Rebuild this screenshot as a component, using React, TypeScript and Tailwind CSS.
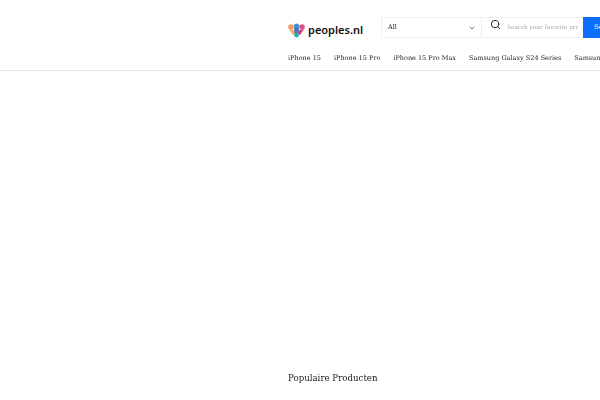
import { ChevronDown, Search } from "lucide-react";

const navItems = ["iPhone 15", "iPhone 15 Pro", "iPhone 15 Pro Max", "Samsung Galaxy S24 Series", "Samsung Galaxy S23 Series"];

function Logo() {
  return (
    <div className="mt-[6px] flex w-[93px] shrink-0 items-center self-start">
      <svg width="17" height="15" viewBox="0 0 17 15" className="shrink-0">
        <circle cx="3" cy="4" r="2.8" fill="#f59a5b" />
        <circle cx="8.5" cy="3" r="2.6" fill="#3f8fd1" />
        <circle cx="14" cy="4" r="2.8" fill="#d9548c" />
        <path d="M1 6.5 L6 7 L7.5 11 L5 12 Z" fill="#f6b26b" />
        <path d="M6 5 L11 5 L10.5 10 L6.5 10 Z" fill="#4a6fc0" />
        <path d="M11 7 L16 6.5 L12 12 L9.8 11 Z" fill="#c9417f" />
        <circle cx="8.5" cy="12" r="2.4" fill="#2aa7b8" />
      </svg>
      <span className="-mt-[2px] ml-[3px] font-['Noto_Sans',sans-serif] text-[11px] font-semibold leading-none text-[#111]">peoples.nl</span>
    </div>
  );
}

export default function App() {
  return (
    <div className="h-[400px] w-[600px] overflow-hidden bg-white font-['DejaVu_Serif',serif]">
      <header className="h-[71px] border-b border-[#e8e8e8] pl-[288px] pt-[17px]">
        <div className="flex w-[312px] items-start overflow-hidden">
          <Logo />
          {/* search */}
          <div className="flex h-[21px] w-[320px] shrink-0 border border-[#eeeeee]">
            <div className="flex w-[100px] shrink-0 items-center justify-between border-r border-[#eeeeee] pl-[6px] pr-[5px] text-[6.5px] text-[#222]">
              <span className="will-change-transform">All</span>
              <ChevronDown size={8} strokeWidth={2} className="text-[#333]" />
            </div>
            <div className="flex w-[96px] shrink-0 items-center overflow-hidden">
              <Search size={11} strokeWidth={2} className="mb-[7px] ml-[8px] shrink-0 text-[#111]" />
              <span className="ml-[6px] whitespace-nowrap text-[5.8px] text-[#aaa] will-change-transform">Search your favorite products</span>
            </div>
            <button className="-mt-px ml-[5px] h-[21px] w-[60px] bg-[#0d6efd] pl-[11px] text-left text-[6.5px] text-white">Search</button>
          </div>
        </div>
        <nav className="mt-[14px] flex w-[312px] gap-[13px] overflow-hidden whitespace-nowrap text-[6.5px] leading-[12px] text-[#222] will-change-transform">
          {navItems.map((item) => (
            <a key={item} className="shrink-0">{item}</a>
          ))}
        </nav>
      </header>
      <main className="pl-[288px] pt-[300px]">
        <h2 className="text-[8.65px] leading-[14px] text-[#222] will-change-transform">Populaire Producten</h2>
      </main>
    </div>
  );
}
